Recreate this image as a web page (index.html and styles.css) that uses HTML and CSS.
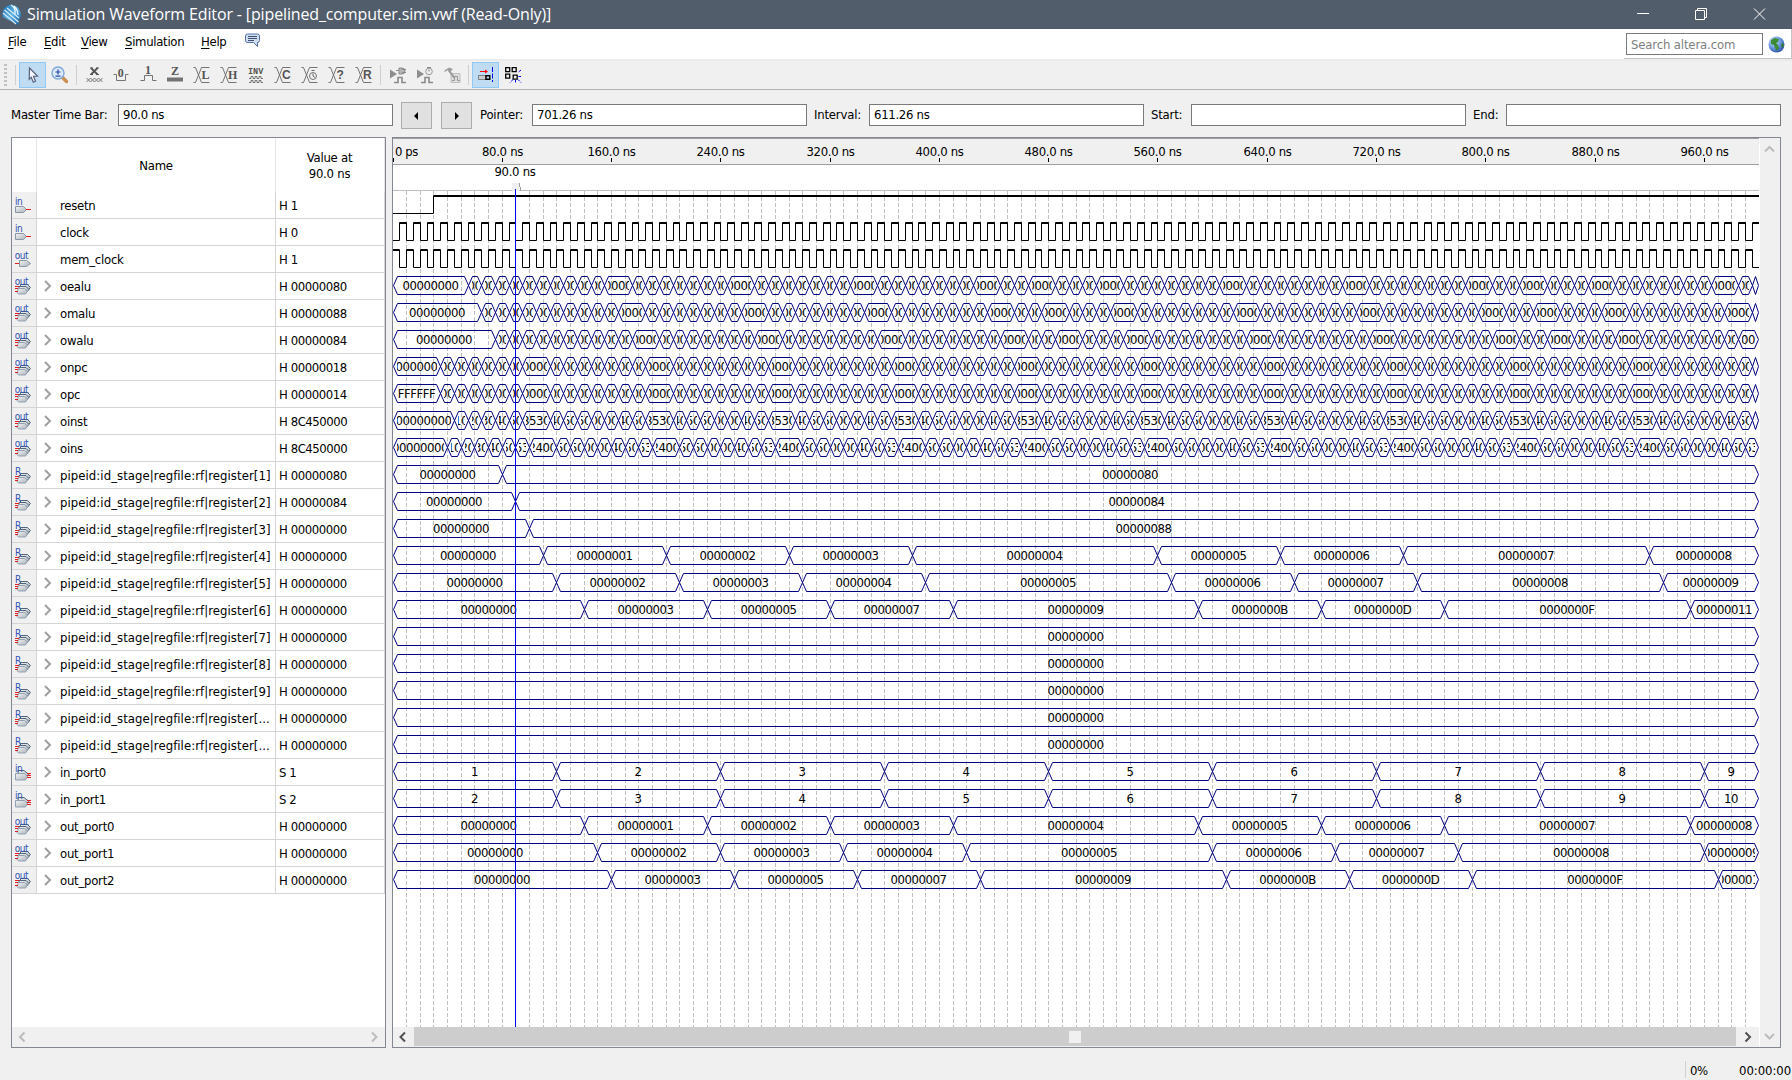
FILE: index.html
```html
<!DOCTYPE html>
<html lang="en">
<head>
<meta charset="utf-8">
<title>Simulation Waveform Editor</title>
<link rel="stylesheet" href="styles.css">
</head>
<body>
<svg class="defs" width="0" height="0">
  <defs>
    <linearGradient id="pin" x1="0" y1="0" x2="1" y2="1"><stop offset="0" stop-color="#f4f4f4"/><stop offset="1" stop-color="#aab2b8"/></linearGradient>
    <radialGradient id="sea" cx=".35" cy=".3" r=".8"><stop offset="0" stop-color="#cfe0f8"/><stop offset=".5" stop-color="#6e9be0"/><stop offset="1" stop-color="#2548a0"/></radialGradient>
    <linearGradient id="logo" x1="0" y1="0" x2="1" y2="1"><stop offset="0" stop-color="#1d6fae"/><stop offset=".5" stop-color="#5fb2e4"/><stop offset="1" stop-color="#0f5a9a"/></linearGradient>
    <symbol id="i-in" viewBox="0 0 18 20"><text x="0" y="9" class="port">in</text><path d="M.5 10.500h8l3 3-3 3h-8z" fill="url(#pin)" stroke="#8797a8"/><path d="M11 13.500h5" stroke="#e02020"/></symbol>
    <symbol id="i-out" viewBox="0 0 18 20"><text x="-.3" y="9" class="port">out</text><path d="M4.500 10.500h7l4 3-4 3h-7z" fill="url(#pin)" stroke="#8797a8"/><path d="M0 13.500h4" stroke="#e02020"/></symbol>
    <symbol id="i-stack" viewBox="0 0 18 20"><path d="M5.500 7.500h7l3 3-3 3h-7z" fill="url(#pin)" stroke="#51657c"/><path d="M4 9.500h7l3 3-3 3h-7z" fill="url(#pin)" stroke="#51657c"/><path d="M3.500 11.500h6l3 2.500-2 3h-7l-1.500-1.500z" fill="url(#pin)" stroke="#8fa0b2"/></symbol>
    <symbol id="i-outbus" viewBox="0 0 18 20"><use href="#i-stack" width="18" height="20"/><path d="M0 9.500h4M0 11.500h3M0 14.500h3" stroke="#e02020"/><text x="-.3" y="8" class="port">out</text></symbol>
    <symbol id="i-reg" viewBox="0 0 18 20"><use href="#i-stack" width="18" height="20"/><path d="M0 10.500h4M0 12.500h3M0 14.500h3" stroke="#e02020"/><text x="0" y="8.500" class="port">R</text></symbol>
    <symbol id="i-inbus" viewBox="0 0 18 20"><path d="M3 7.500h6l5 4-3 3H3z" fill="url(#pin)" stroke="#51657c"/><path d="M.5 10.500h9l3 3-2 3.500h-10z" fill="url(#pin)" stroke="#8fa0b2"/><path d="M12 10.500h4M12 12.500h4M12 14.500h4" stroke="#e02020"/><text x="0" y="8.500" class="port">in</text></symbol>
    <symbol id="i-edge" viewBox="0 0 18 18"><path d="M.5 1.500h2l6 15h8M.5 16.500h2l6-15h8" fill="none" stroke="#747474"/></symbol>
    <symbol id="i-play" viewBox="0 0 18 18"><path d="M1 3.500l7 4.500-7 4.500z" fill="#8d8d8d"/><path d="M5 16.500h4v-5h4v5h4" fill="none" stroke="#8a8a8a" stroke-width="1.600"/></symbol>
  </defs>
</svg>

<header class="titlebar">
  <svg class="app-icon" width="20" height="22" viewBox="0 0 20 22"><path d="M7 1q6-1 10 4 4 6 0 11l-1 5L1 13Q-1 4 7 1z" fill="url(#logo)"/><path d="M1 9l13 11M2.500 6l14 12M5 4l12 10" stroke="#d9eefa" stroke-width="1.100"/><path d="M9 1q5 3 4 9M12 2q4 4 4 9" stroke="#e8f6ff" stroke-width="1.300" fill="none"/></svg>
  <span class="title">Simulation Waveform Editor - [pipelined_computer.sim.vwf (Read-Only)]</span>
  <div class="window-buttons">
    <svg width="58" height="29" viewBox="0 0 58 29"><path d="M23 13.500h12"/></svg>
    <svg width="58" height="29" viewBox="0 0 58 29"><path d="M23.500 10.500h9v9h-9zM25.500 10.500v-2h9v9h-2"/></svg>
    <svg width="58" height="29" viewBox="0 0 58 29"><path d="M24 8.500l11 11M35 8.500l-11 11"/></svg>
  </div>
</header>

<nav class="menubar">
  <span class="menu m-file"><u>F</u>ile</span><span class="menu m-edit"><u>E</u>dit</span><span class="menu m-view"><u>V</u>iew</span><span class="menu m-sim"><u>S</u>imulation</span><span class="menu m-help"><u>H</u>elp</span>
  <svg class="bubble" width="16" height="15" viewBox="0 0 16 15"><path d="M2.500 1h10q2 0 2 2v4.500q0 2-2 2v4l-4-4h-6q-2 0-2-2V3q0-2 2-2z" fill="#cfdcf0" stroke="#5672a3"/><path d="M3 3.500h9M3 5.500h9M3 7.500h6" stroke="#3e4f70"/></svg>
  <div class="search-panel">
    <div class="search">Search altera.com</div>
    <svg width="17" height="17" viewBox="0 0 17 17"><circle cx="8.500" cy="8.500" r="8" fill="url(#sea)"/><path d="M3 4l4-2 4 1-1 3-2 1 2 2 1 3-2 3-2-3-1-3-3-1z" fill="#3c8c35"/><path d="M14 7l2 1-1 4-2-2z" fill="#2f7d34"/></svg>
  </div>
</nav>

<div class="toolbar">
  <i class="grip"></i><i class="sep s1"></i>
  <span class="tool active"><svg width="18" height="18"><path d="M5.500 2l8 8-4 .3 2 5-2.200 1-2.100-5-2 2z" fill="#f4f6fa" stroke="#56617c" stroke-width="1.200"/></svg></span>
  <span class="tool"><svg width="18" height="18"><path d="M11.500 11.500l4 4" stroke="#c98f4e" stroke-width="3.400" stroke-linecap="round"/><circle cx="7" cy="7" r="6" fill="#dbe9fb" stroke="#7fa7da" stroke-width="1.400"/><path d="M4.500 6h5M7 3.500v5M4.500 10.200h5" stroke="#2748a5" stroke-width="1.200"/></svg></span>
  <i class="sep s2"></i>
  <span class="tool"><svg width="18" height="18"><path d="M5 2h3M11 2h3M5 8.500h3M11 8.500h3" stroke="#555"/><path d="M6 2l6.500 6.500M12.500 2L6 8.500" stroke="#555" stroke-width="1.800"/><path d="M1.500 12l4 4 4-4 4 4 4-4M1.500 16l4-4 4 4 4-4 4 4" fill="none" stroke="#747474"/></svg></span>
  <span class="tool"><svg width="18" height="18"><text x="5.700" y="10.500" class="glyph letter">0</text><path d="M1.500 8.500h3v6h9v-6h3" fill="none" stroke="#747474"/></svg></span>
  <span class="tool"><svg width="18" height="18"><text x="6" y="8" class="glyph letter">1</text><path d="M1.500 14.500h4v-5h8v5h4" fill="none" stroke="#747474"/></svg></span>
  <span class="tool"><svg width="18" height="18"><text x="5" y="9" class="glyph letter">Z</text><path d="M1 11.500h16v4H1z" fill="#747474"/></svg></span>
  <span class="tool"><svg width="18" height="18"><use href="#i-edge"/><text x="8.500" y="13" class="glyph letter">L</text></svg></span>
  <span class="tool"><svg width="18" height="18"><use href="#i-edge"/><text x="8" y="13" class="glyph letter">H</text></svg></span>
  <span class="tool"><svg width="18" height="18"><text x="1" y="8" class="glyph inv">INV</text><path d="M2 12.500h2v-2h2v2h2v-2h2v2h2v-2h2v2h2M2 16.500h2v-2h2v2h2v-2h2v2h2v-2h2v2h2" fill="none" stroke="#747474"/></svg></span>
  <span class="tool"><svg width="18" height="18"><use href="#i-edge"/><text x="8" y="13" class="glyph sans">C</text></svg></span>
  <span class="tool"><svg width="18" height="18"><use href="#i-edge"/><circle cx="12" cy="10" r="3.500" fill="#f0f0f0" stroke="#747474"/><path d="M12 10V7.500M12 10l2 1.500M10.500 4.500h3" stroke="#666"/></svg></span>
  <span class="tool"><svg width="18" height="18"><use href="#i-edge"/><text x="8.500" y="13" class="glyph sans">?</text></svg></span>
  <span class="tool"><svg width="18" height="18"><use href="#i-edge"/><text x="8" y="13" class="glyph sans">R</text></svg></span>
  <i class="sep s3"></i>
  <span class="tool"><svg width="18" height="18"><use href="#i-play"/><path d="M7 4.500h3V2h3q3 0 3 3t-3 3h-3V5.500M13 3.500h4M13 6.500h4" fill="#b5b5b5" stroke="#8a8a8a"/></svg></span>
  <span class="tool"><svg width="18" height="18"><use href="#i-play"/><circle cx="13" cy="5.500" r="3.300" fill="#ededed" stroke="#999"/><path d="M13 5.500V3.500M11 1.500h4" stroke="#888"/></svg></span>
  <span class="tool"><svg width="18" height="18"><path d="M8 7.500h9v9H8z" fill="#dedede" stroke="#c0c0c0"/><path d="M9 14.500h2.500v-4h3v4H17" fill="none" stroke="#999"/><path d="M1 6.500l1-2.500 4-2.500 4 1.500-2.500 2.500L5 4z" fill="#a0a0a0"/><path d="M5.500 4l6 8" fill="none" stroke="#989898" stroke-width="2"/></svg></span>
  <i class="sep s4"></i>
  <span class="tool active"><svg width="18" height="18"><path d="M3 5.500h7" stroke="#f00"/><path d="M8 3.500l3 2-3 2z" fill="#f00"/><path d="M1.500 9.500h7v4h-7z" fill="#ccc" stroke="#333" stroke-dasharray="1 1"/><path d="M9 9.700h3.800v3.600H9z" fill="none" stroke="#000" stroke-width="1.400"/><path d="M15.500 1v15" stroke="#0000e8" stroke-dasharray="5 1.500"/></svg></span>
  <span class="tool"><svg width="18" height="18"><path d="M1.700 1.700h4v4h-4zM8.200 1.700h4v4h-4zM1.700 8.200h4v4h-4zM9.200 9.200h4v4h-4z" fill="none" stroke="#000" stroke-width="1.300"/><path d="M17 4l-3 2.500M14.500 10.500H17M14 13.500l3 3M11.500 14v3M9 13.500l-3 3" stroke="#0000f0" stroke-dasharray="2.500 1"/></svg></span>
</div>

<section class="timebar">
  <label class="l-master">Master Time Bar:</label><div class="field">90.0 ns</div>
  <span class="step first"><svg width="8" height="8"><path d="M5 0v8L1 4z"/></svg></span><span class="step"><svg width="8" height="8"><path d="M2 0v8l4-4z"/></svg></span>
  <label class="l-pointer">Pointer:</label><div class="field">701.26 ns</div>
  <label class="l-interval">Interval:</label><div class="field">611.26 ns</div>
  <label class="l-start">Start:</label><div class="field"></div>
  <label class="l-end">End:</label><div class="field"></div>
</section>

<main class="workspace">
  <section class="signals">
    <div class="sig-head"><span class="c-icon"></span><span class="c-name">Name</span><span class="c-value">Value at<br>90.0 ns</span></div>
    <div class="sig-rows" id="rows"></div>
    <div class="hscroll faint">
      <svg width="22" height="20"><path d="M12.500 5.500L8 10l4.500 4.500"/></svg>
      <svg width="22" height="20"><path d="M9 5.500l4.500 4.500L9 14.500"/></svg>
    </div>
  </section>

  <section class="waves">
    <div class="wave-main">
      <svg id="ruler" class="ruler" width="1366" height="53"></svg>
      <div class="plot"><svg id="plot" width="1366" height="836"></svg><i class="cursor-line"></i></div>
      <div class="hscroll">
        <svg width="21" height="20"><path d="M12 5.500L7.500 10l4.500 4.500"/></svg>
        <div class="track"><i class="thumb"></i></div>
        <svg width="23" height="20"><path d="M9.500 5.500L14 10l-4.500 4.500"/></svg>
      </div>
    </div>
    <div class="vscroll">
      <svg width="20" height="22"><path d="M5 13.500L9.500 9l4.500 4.500"/></svg>
      <svg width="20" height="22"><path d="M5 9l4.500 4.500L14 9"/></svg>
    </div>
  </section>
</main>

<footer class="status"><span class="pct">0%</span><span class="clock">00:00:00</span></footer>
<script src="waves.js"></script>
</body>
</html>
```
FILE: styles.css
```css
* { box-sizing: border-box; }
body {
  margin: 0; width: 1792px; height: 1080px; overflow: hidden;
  display: flex; flex-direction: column;
  background: #f0f0f0; color: #000;
  font-family: "DejaVu Sans Condensed", "DejaVu Sans", sans-serif;
  font-stretch: condensed; font-size: 13px; letter-spacing: -0.44px; line-height: 16px;
}
svg { display: block; flex: none; }
.defs { position: absolute; }

.titlebar { height: 29px; flex: none; display: flex; align-items: center; background: #525d6b; color: #fff; padding-left: 2px; }
.title { margin: -2px 0 0 5px; font: 16px/26px "Open Sans", sans-serif; letter-spacing: -0.14px; white-space: nowrap; }
.window-buttons { margin-left: auto; display: flex; padding-right: 4px; }
.window-buttons path { fill: none; stroke: #fff; }

.menubar { height: 32px; flex: none; display: flex; background: #fff; border-bottom: 2px solid #ebebeb; padding-left: 8px; }
.menu { line-height: 25px; letter-spacing: -0.3px; }
.menu u { text-underline-offset: 2px; }
.m-file { width: 36px; }
.m-edit { width: 37px; }
.m-view { width: 44px; }
.m-sim { width: 76px; }
.m-help { width: 44px; }
.bubble { margin-top: 4px; }
.search-panel { margin-left: auto; width: 168px; height: 30px; display: flex; gap: 5px; padding: 4px 0 0 2px; border-right: 1px solid #c4c4c4; border-bottom: 1px solid #c4c4c4; }
.search { width: 137px; height: 22px; border: 1px solid #7a7a7a; padding-left: 4px; line-height: 21px; color: #808080; letter-spacing: -0.15px; }
.search-panel svg { margin-top: 3px; }

.toolbar { height: 29px; flex: none; display: flex; align-items: center; border-bottom: 1px solid #b4b4b4; }
.tool { width: 27px; height: 26px; display: flex; align-items: center; justify-content: center; }
.tool.active { background: #c0dcf3; border: 1px solid #90c8f6; }
.grip { width: 3px; height: 22px; margin-left: 4px; background: repeating-linear-gradient(#c0c0c0 0 2px, transparent 2px 4px); }
.sep { width: 1px; height: 20px; background: #cfcfcf; }
.s1 { margin: 0 3px 0 8px; }
.s2 { margin: 0 3px; }
.s3 { margin: 0 3px; }
.s4 { margin: 0 3px; }
.glyph { font: bold 11px "Liberation Mono", monospace; fill: #555; letter-spacing: 0; }
.glyph.letter { font: bold 12px "Liberation Serif", serif; }
.glyph.sans { font: bold 12px "Liberation Sans", sans-serif; }
.glyph.inv { font-size: 8.500px; }

.timebar { height: 47px; flex: none; display: flex; align-items: flex-start; padding: 14px 0 0 11px; }
.timebar label { line-height: 22px; white-space: nowrap; letter-spacing: -0.2px; }
.field { width: 275px; height: 22px; background: #fff; border: 1px solid #7a7a7a; padding-left: 4px; line-height: 20px; letter-spacing: -0.3px; }
.step { width: 31px; height: 27px; margin: -2px 0 0 9px; border: 1px solid #adadad; background: #e1e1e1; display: flex; align-items: center; justify-content: center; }
.step.first { margin-left: 8px; }
.l-master { width: 107px; }
.l-pointer { width: 60px; padding-left: 8px; }
.l-interval { width: 62px; padding-left: 7px; }
.l-start { width: 47px; padding-left: 7px; }
.l-end { width: 40px; padding-left: 7px; }

.workspace { height: 911px; flex: none; display: flex; gap: 6px; padding-left: 11px; }
.signals { width: 375px; border: 1px solid #828790; background: #fff; display: flex; flex-direction: column; }
.sig-head { height: 54px; display: flex; align-items: center; text-align: center; letter-spacing: -0.25px; }
.sig-head span { height: 54px; display: flex; align-items: center; justify-content: center; border-right: 1px solid #e5e5e5; }
.sig-head .c-name { padding-top: 2px; }
.sig-head .c-value { padding: 2px 1px 0 0; }
.c-icon { width: 25px; }
.c-name { width: 239px; }
.c-value { width: 109px; }
.sig-rows { flex: 1; }
.row { height: 27px; display: flex; width: 373px; }
.row > span { height: 27px; border-right: 1px solid #d5d5d5; border-bottom: 1px solid #d5d5d5; line-height: 27px; white-space: nowrap; }
.row .c-icon { background: #f0f0f0; padding: 4px 0 0 3px; }
.row .c-name { display: flex; align-items: center; letter-spacing: -0.25px; }
.row .c-value { padding-left: 3px; }
.name { font-weight: 400; }
.name.reg { letter-spacing: 0.06px; }
.chev { width: 23px; display: flex; padding-left: 6.5px; }
.chev path { fill: none; stroke: #a0a0a0; stroke-width: 2; }
.port { font: 10px "DejaVu Sans Condensed", "DejaVu Sans", sans-serif; letter-spacing: -0.5px; fill: #2f50b4; }

.hscroll { height: 20px; flex: none; display: flex; justify-content: space-between; background: #f0f0f0; }
.hscroll path, .vscroll path { fill: none; stroke: #505050; stroke-width: 2; }
.hscroll.faint path, .vscroll path { stroke: #bcbcbc; }
.track { flex: 1; height: 19px; background: #cdcdcd; display: flex; align-items: center; padding-left: 655px; }
.thumb { width: 12px; height: 12px; background: #f0f0f0; }

.waves { width: 1389px; border: 1px solid #828790; display: flex; background: #f0f0f0; }
.wave-main { width: 1366px; }
.ruler { background: linear-gradient(#a0a0a0 0 1px, #f0f0f0 1px 26px, #a0a0a0 26px 27px, #fff 27px); }
.plot { position: relative; height: 836px; background: #fff; }
.cursor-line { position: absolute; left: 122px; top: -2px; bottom: 0; width: 1px; background: #0000f0; }
.vscroll { width: 21px; border-left: 1px solid #fff; display: flex; flex-direction: column; justify-content: space-between; }
.wtext { font-size: 13px; letter-spacing: -0.44px; text-anchor: middle; }
.rtext { letter-spacing: -0.32px; }

.status { flex: 1; display: flex; padding: 13px 0 0 1685px; }
.status span { height: 17px; line-height: 20px; }
.pct { width: 54px; padding-left: 4px; border-left: 1px solid #d0d0d0; }
.clock { letter-spacing: -0.05px; }
```
FILE: waves.js
```js
const SCALE = 1.366;
const END = 1000;
const X = t => Math.floor(t * SCALE);

const hex = s => s.padStart(8, '0');
const steps = (times, values) => [0, ...times].map((t, i) => [t, hex(values[i])]);

// Cells every 10 ns; the times listed in `wide` open a 20 ns cell.
function stream(first, firstValue, wide, small, wideValue) {
  const out = [[0, firstValue]];
  let t = first, n = 0;
  while (t < END) {
    if (wide.includes(t)) { out.push([t, wideValue]); t += 20; n = 0; }
    else { out.push([t, small(t, n++)]); t += 10; }
  }
  return out;
}
const Z = '00000000';
const zero = () => Z;
const aluWide = [155, 245, 335, 425, 465, 515, 605, 695, 785, 825, 875, 965];
const shift = d => aluWide.map(t => t + d);
const every90 = t0 => Array.from({ length: 10 }, (_, i) => t0 + 90 * i);
const lead = ['00010000', '00020000', '00030000', '00040000', '00050000', '00853020'];
const loop = ['00040000', '00050000', '00050000', Z, Z, '00040000', '00050000'];
const loop2 = ['00050000', '00050000', Z, Z, '00040000', '00050000', '00853020'];

const t120 = [120, 240, 360, 480, 600, 720, 840, 960];
const t140 = [140, 230, 320, 410, 590, 680, 770, 950];
const plus = (a, d) => a.map(t => t + d);
const R = n => `pipeid:id_stage|regfile:rf|register[${n}`;
const odd = ['0', '3', '5', '7', '9', 'B', 'D', 'F', '11'];
const up = ['0', '2', '3', '4', '5', '6', '7', '8', '9'];
const count = ['0', '1', '2', '3', '4', '5', '6', '7', '8'];

const signals = [
  ['in', 'resetn', 'H 1', 'reset'],
  ['in', 'clock', 'H 0', 'clk0'],
  ['out', 'mem_clock', 'H 1', 'clk1'],
  ['outbus', 'oealu', 'H 00000080', stream(55, Z, aluWide, zero, Z)],
  ['outbus', 'omalu', 'H 00000088', stream(65, Z, shift(10), zero, Z)],
  ['outbus', 'owalu', 'H 00000084', stream(75, Z, shift(20), zero, Z)],
  ['outbus', 'onpc', 'H 00000018', stream(35, Z, every90(95), zero, Z)],
  ['outbus', 'opc', 'H 00000014', stream(35, 'FFFFFFFF', every90(95), zero, Z)],
  ['outbus', 'oinst', 'H 8C450000', stream(45, Z, every90(95), (t, n) => t < 95 ? lead[n] : loop[n], '00853020')],
  ['outbus', 'oins', 'H 8C450000', stream(40, Z, every90(100), (t, n) => t < 100 ? lead[n] : loop2[n], 'AC240000')],
  ['reg', R('1]'), 'H 00000080', steps([80], ['0', '80'])],
  ['reg', R('2]'), 'H 00000084', steps([90], ['0', '84'])],
  ['reg', R('3]'), 'H 00000000', steps([100], ['0', '88'])],
  ['reg', R('4]'), 'H 00000000', steps([110, 200, 290, 380, 560, 650, 740, 920], count)],
  ['reg', R('5]'), 'H 00000000', steps([120, 210, 300, 390, 570, 660, 750, 930], up)],
  ['reg', R('6]'), 'H 00000000', steps(t140, odd)],
  ['reg', R('7]'), 'H 00000000', steps([], ['0'])],
  ['reg', R('8]'), 'H 00000000', steps([], ['0'])],
  ['reg', R('9]'), 'H 00000000', steps([], ['0'])],
  ['reg', R('...'), 'H 00000000', steps([], ['0'])],
  ['reg', R('...'), 'H 00000000', steps([], ['0'])],
  ['inbus', 'in_port0', 'S 1', [0, ...t120].map((t, i) => [t, String(i + 1)])],
  ['inbus', 'in_port1', 'S 2', [0, ...t120].map((t, i) => [t, String(i + 2)])],
  ['outbus', 'out_port0', 'H 00000000', steps(t140, count)],
  ['outbus', 'out_port1', 'H 00000000', steps(plus(t140, 10), up)],
  ['outbus', 'out_port2', 'H 00000000', steps(plus(t140, 20), odd)],
];

// Signal list
document.getElementById('rows').innerHTML = signals.map(([icon, name, value], i) => {
  const chev = i > 2 ? '<svg width="8" height="12"><path d="M1 1l5 5-5 5"/></svg>' : '';
  return `<div class="row"><span class="c-icon"><svg width="18" height="20"><use href="#i-${icon}"/></svg></span>` +
    `<span class="c-name"><i class="chev">${chev}</i><b class="name ${icon}">${name}</b></span>` +
    `<span class="c-value">${value}</span></div>`;
}).join('');

// Ruler with the master time bar flag
let r = '';
for (let t = 0; t <= 960; t += 80) {
  const x = X(t);
  r += `<path d="M${x + .5} 20v4" stroke="#000"/>`;
  r += t ? `<text class="wtext rtext" x="${x + .5}" y="18">${t}.0 ns</text>` : '<text class="wtext" x="13.500" y="18">0 ps</text>';
}
r += '<path d="M0 52.500h1366" stroke="#c0c0c0"/><path d="M119 45h7v8h-7z" fill="#f0f0f0"/>' +
  '<path d="M126.500 45v4M127.500 49v4" stroke="#a0a0a0"/><text class="wtext rtext" x="122" y="38">90.0 ns</text>';
document.getElementById('ruler').innerHTML = r;

// Waveforms
let g = '';
for (let t = 10; t < END; t += 10) g += `M${X(t) + .5} 0V836`;
let s = `<path d="${g}" stroke="#c0c0c0" stroke-dasharray="4 2"/>`;

function digital(y, edges, level) {
  const hi = y + 3.5, lo = y + 21.5;
  let d = `M0 ${level ? hi : lo}`, thick = '', x0 = 0;
  for (const t of [...edges, END]) {
    const x = X(t) + .5;
    if (level) thick += `M${x0} ${hi + 1}H${x}`;
    d += `H${x}`;
    if (t < END) d += `V${level ? lo : hi}`;
    level = !level;
    x0 = x;
  }
  return `<path d="${d}${thick}" fill="none" stroke="#000"/>`;
}
// Only the middle digits that fit a narrow cell are set.
function middle(label, w) {
  const n = 2 * Math.ceil(w / 14);
  return n < label.length ? label.slice((label.length - n) / 2, (label.length + n) / 2) : label;
}
function bus(y, cells) {
  const top = y + 3.5, mid = y + 12.5, bot = y + 21.5;
  let d = '', txt = '';
  cells.forEach(([t, label], i) => {
    const a = X(t) + .5, b = (cells[i + 1] ? X(cells[i + 1][0]) : 1365) + .5;
    const k = Math.min(4, (b - a) / 2);
    d += `M${a} ${mid}L${a + k} ${top}H${b - k}L${b} ${mid}L${b - k} ${bot}H${a + k}z`;
    const w = b - a - 7;
    if (w > 2) txt += `<svg x="${a + 3.5}" y="${y}" width="${w}" height="26"><text class="wtext" x="${w / 2 - .5}" y="17">${middle(label, w)}</text></svg>`;
  });
  return `${txt}<path d="${d}" fill="none" stroke="#000080"/>`;
}
const half = Array.from({ length: 199 }, (_, i) => 5 * (i + 1));
signals.forEach(([, , , wave], i) => {
  const y = 1 + 27 * i;
  if (wave === 'reset') s += digital(y, [30], false);
  else if (wave === 'clk0') s += digital(y, half, false);
  else if (wave === 'clk1') s += digital(y, half, true);
  else s += bus(y, wave);
});
document.getElementById('plot').innerHTML = s;
```
